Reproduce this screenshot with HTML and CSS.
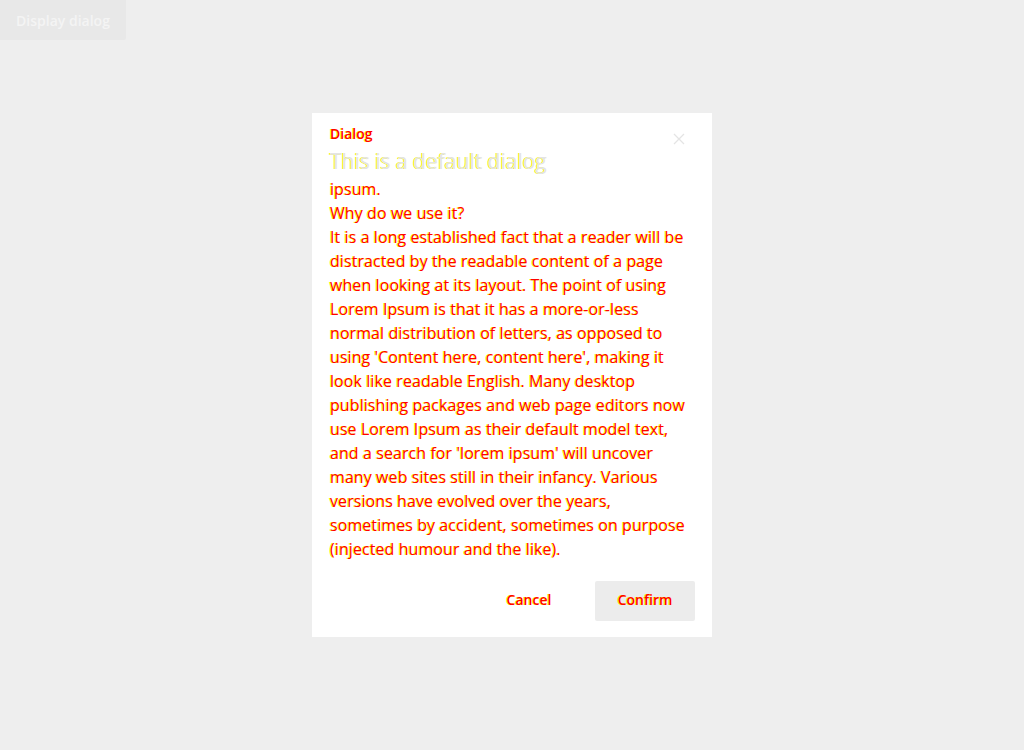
FILE: index.html
```html
<!DOCTYPE html>
<html lang="en">
<head>
<meta charset="utf-8">
<title>Dialog</title>
<link rel="stylesheet" href="styles.css">
</head>
<body>
<button class="open-btn" type="button">Display dialog</button>
<div class="overlay">
  <div class="dialog" role="dialog" aria-labelledby="dlg-title">
    <button class="close" type="button" aria-label="Close">
      <svg width="12" height="12" viewBox="0 0 12 12"><path d="M1 1L11 11M11 1L1 11" stroke="#e4e4e4" stroke-width="1.3" fill="none"/></svg>
    </button>
    <div class="label">Dialog</div>
    <h2 class="title" id="dlg-title">This is a default dialog</h2>
    <div class="content">
      <p>ipsum.</p>
      <p>Why do we use it?</p>
      <p>It is a long established fact that a reader will be distracted by the readable content of a page when looking at its layout. The point of using Lorem Ipsum is that it has a more-or-less normal distribution of letters, as opposed to using 'Content here, content here', making it look like readable English. Many desktop publishing packages and web page editors now use Lorem Ipsum as their default model text, and a search for 'lorem ipsum' will uncover many web sites still in their infancy. Various versions have evolved over the years, sometimes by accident, sometimes on purpose (injected humour and the like).</p>
    </div>
    <div class="actions">
      <button class="btn btn-ghost" type="button">Cancel</button>
      <button class="btn btn-primary" type="button">Confirm</button>
    </div>
  </div>
</div>
</body>
</html>
```
FILE: styles.css
```css
html, body {
  margin: 0;
  padding: 0;
  height: 100%;
}
body {
  background: #eeeeee;
  font-family: "Open Sans", "Noto Sans", sans-serif;
}
.open-btn {
  display: block;
  width: 126px;
  height: 40px;
  border: 0;
  border-radius: 0 0 2px 0;
  background: #e8e8e8;
  color: #f4f4f4;
  font-family: inherit;
  font-size: 14px;
  font-weight: 600;
  padding: 0;
}
.overlay {
  position: fixed;
  inset: 0;
  display: flex;
  align-items: center;
  justify-content: center;
}
.dialog {
  position: relative;
  width: 400px;
  box-sizing: border-box;
  background: #ffffff;
  padding: 13px 17px 16px 18px;
}
.close {
  position: absolute;
  top: 20px;
  right: 27px;
  width: 12px;
  height: 12px;
  padding: 0;
  border: 0;
  background: none;
  display: flex;
}
.label {
  font-size: 14px;
  font-weight: 600;
  line-height: 16px;
  color: #ff0000;
  text-shadow: -1px 0 #ffff00;
}
.title {
  margin: 3px 0 0;
  font-size: 21px;
  font-weight: 400;
  line-height: 32px;
  color: #e4e4e4;
  text-shadow: -1px 0 #f4f400;
}
.content {
  width: 360px;
  font-size: 16px;
  line-height: 24px;
  letter-spacing: 0.08px;
  color: #ff0000;
  text-shadow: -1px 0 #ffff00;
}
.content p {
  margin: 0;
}
.actions {
  display: flex;
  justify-content: flex-end;
  gap: 16px;
  margin-top: 20px;
}
.btn {
  width: 100px;
  height: 40px;
  border: 0;
  border-radius: 2px;
  font-family: inherit;
  font-size: 14px;
  font-weight: 600;
  line-height: 38px;
  padding: 0 0 2px;
  color: #ff0000;
  text-shadow: -1px 0 #ffff00;
}
.btn-ghost {
  background: #ffffff;
}
.btn-primary {
  background: #ececec;
}
```
